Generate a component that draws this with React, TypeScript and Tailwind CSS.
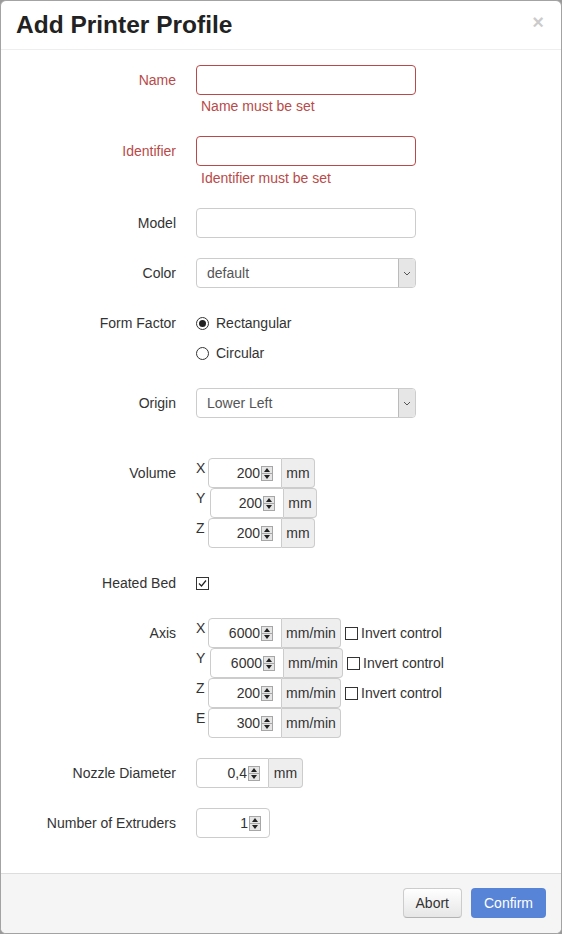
import React from 'react'

const ERR = 'text-[#b94a48]'

function Spinner() {
  return (
    <span className="ml-[1px] flex h-[15px] w-[12px] flex-col border border-[#a6a6a6] bg-[#e5e5e5]">
      <span className="flex flex-1 items-center justify-center border-b border-[#a6a6a6]">
        <svg width="6" height="4" viewBox="0 0 6 4"><path d="M0 4 L3 0 L6 4 Z" fill="#222" /></svg>
      </span>
      <span className="flex flex-1 items-center justify-center">
        <svg width="6" height="4" viewBox="0 0 6 4"><path d="M0 0 L3 4 L6 0 Z" fill="#222" /></svg>
      </span>
    </span>
  )
}

function NumInput({ value, w, rounded = 'rounded-l-[4px]' }: { value: string; w: string; rounded?: string }) {
  return (
    <div className={`flex h-[30px] items-center justify-end border border-[#ccc] bg-white pl-[6px] pr-[8px] text-[#333] ${w} ${rounded}`}>
      <span>{value}</span>
      <Spinner />
    </div>
  )
}

function Addon({ children, w }: { children: React.ReactNode; w: string }) {
  return (
    <div className={`flex h-[30px] items-center justify-center rounded-r-[4px] border border-l-0 border-[#ccc] bg-[#eee] text-[#333] ${w}`}>
      {children}
    </div>
  )
}

function Checkbox({ checked = false }: { checked?: boolean }) {
  return (
    <span className="flex h-[13px] w-[13px] items-center justify-center border border-[#333] bg-white">
      {checked && (
        <svg width="11" height="11" viewBox="0 0 11 11">
          <path d="M2 5.5 L4.5 8 L9 2.5" fill="none" stroke="#222" strokeWidth="1.2" />
        </svg>
      )}
    </span>
  )
}

function Radio({ checked = false }: { checked?: boolean }) {
  return (
    <span className="flex h-[13px] w-[13px] items-center justify-center rounded-full border border-[#333] bg-white">
      {checked && <span className="h-[7px] w-[7px] rounded-full bg-[#222]" />}
    </span>
  )
}

function Select({ value }: { value: string }) {
  return (
    <div className="flex h-[30px] w-[220px] items-stretch rounded-[4px] border border-[#ccc] bg-white text-[#555]">
      <span className="flex flex-1 items-center pl-[10px]">{value}</span>
      <span className="flex w-[17px] items-center justify-center rounded-r-[3px] border-l border-[#bbb] bg-[#e6e6e6]">
        <svg width="8" height="5" viewBox="0 0 8 5"><path d="M1 1 L4 4 L7 1" fill="none" stroke="#555" strokeWidth="1" /></svg>
      </span>
    </div>
  )
}

function Row({ label, error, children, extra = '' }: { label: string; error?: boolean; children: React.ReactNode; extra?: string }) {
  return (
    <div className={`mb-[20px] flex ${extra}`}>
      <label className={`w-[160px] shrink-0 pt-[5px] text-right leading-[20px] ${error ? ERR : 'text-[#333]'}`}>{label}</label>
      <div className="ml-[20px] flex flex-col">{children}</div>
    </div>
  )
}

function TextInput({ error }: { error?: boolean }) {
  return <div className={`h-[30px] w-[220px] rounded-[4px] border bg-white ${error ? 'border-[#b94a48]' : 'border-[#ccc]'}`} />
}

function AxisLine({ letter, value, unit, unitW, invert, shift }: { letter: string; value: string; unit: string; unitW: string; invert?: boolean; shift?: boolean }) {
  return (
    <div className="flex h-[30px] items-start">
      <span className={`w-[12px] leading-[20px] ${shift ? 'mr-[2px]' : ''}`}>{letter}</span>
      <NumInput value={value} w="w-[74px]" />
      <Addon w={unitW}>{unit}</Addon>
      {invert && (
        <span className="ml-[4px] flex h-[30px] items-center gap-[3px]">
          <Checkbox />
          <span>Invert control</span>
        </span>
      )}
    </div>
  )
}

export default function App() {
  return (
    <div className="min-h-screen bg-[#9a9a9a]" style={{ fontFamily: '"Liberation Sans", Arial, sans-serif' }}>
      <div className="flex h-[934px] w-[562px] flex-col overflow-hidden rounded-[6px] border border-[#a3a3a3] bg-white text-[14px] text-[#333]">
        {/* header */}
        <div className="flex items-start justify-between border-b border-[#eee] px-[15px] py-[9px]">
          <h3 className="text-[24.5px] font-bold leading-[30px] text-[#222]">Add Printer Profile</h3>
          <span className="mt-[2px] mr-[2px] text-[20px] font-bold leading-[20px] text-[#000] opacity-20">×</span>
        </div>

        {/* body */}
        <div className="flex-1 px-[15px] pt-[15px]">
          <Row label="Name" error>
            <TextInput error />
            <span className={`ml-[5px] mt-[1px] leading-[20px] ${ERR}`}>Name must be set</span>
          </Row>
          <Row label="Identifier" error>
            <TextInput error />
            <span className={`ml-[5px] mt-[2px] leading-[20px] ${ERR}`}>Identifier must be set</span>
          </Row>
          <Row label="Model">
            <TextInput />
          </Row>
          <Row label="Color">
            <Select value="default" />
          </Row>
          <Row label="Form Factor">
            <span className="flex h-[30px] items-center gap-[7px]"><Radio checked />Rectangular</span>
            <span className="flex h-[30px] items-center gap-[7px]"><Radio />Circular</span>
          </Row>
          <Row label="Origin" extra="mb-[40px]">
            <Select value="Lower Left" />
          </Row>
          <Row label="Volume">
            <AxisLine letter="X" value="200" unit="mm" unitW="w-[33px]" />
            <AxisLine letter="Y" value="200" unit="mm" unitW="w-[33px]" shift />
            <AxisLine letter="Z" value="200" unit="mm" unitW="w-[33px]" />
          </Row>
          <Row label="Heated Bed">
            <span className="flex h-[30px] items-center"><Checkbox checked /></span>
          </Row>
          <Row label="Axis">
            <AxisLine letter="X" value="6000" unit="mm/min" unitW="w-[59px]" invert />
            <AxisLine letter="Y" value="6000" unit="mm/min" unitW="w-[59px]" invert shift />
            <AxisLine letter="Z" value="200" unit="mm/min" unitW="w-[59px]" invert />
            <AxisLine letter="E" value="300" unit="mm/min" unitW="w-[59px]" />
          </Row>
          <Row label="Nozzle Diameter">
            <div className="flex">
              <NumInput value="0,4" w="w-[73px]" />
              <Addon w="w-[34px]">mm</Addon>
            </div>
          </Row>
          <Row label="Number of Extruders">
            <NumInput value="1" w="w-[74px]" rounded="rounded-[4px]" />
          </Row>
        </div>

        {/* footer */}
        <div className="flex justify-end gap-[9px] border-t border-[#ddd] bg-[#f5f5f5] px-[15px] pt-[14px] pb-[15px]">
          <button className="h-[30px] rounded-[4px] border border-[#ccc] border-b-[#b3b3b3] bg-gradient-to-b from-white to-[#e6e6e6] px-[12px] text-[14px] text-[#333]">
            Abort
          </button>
          <button className="h-[30px] rounded-[4px] bg-[#5884d8] px-[13px] text-[14px] text-white">
            Confirm
          </button>
        </div>
      </div>
    </div>
  )
}
